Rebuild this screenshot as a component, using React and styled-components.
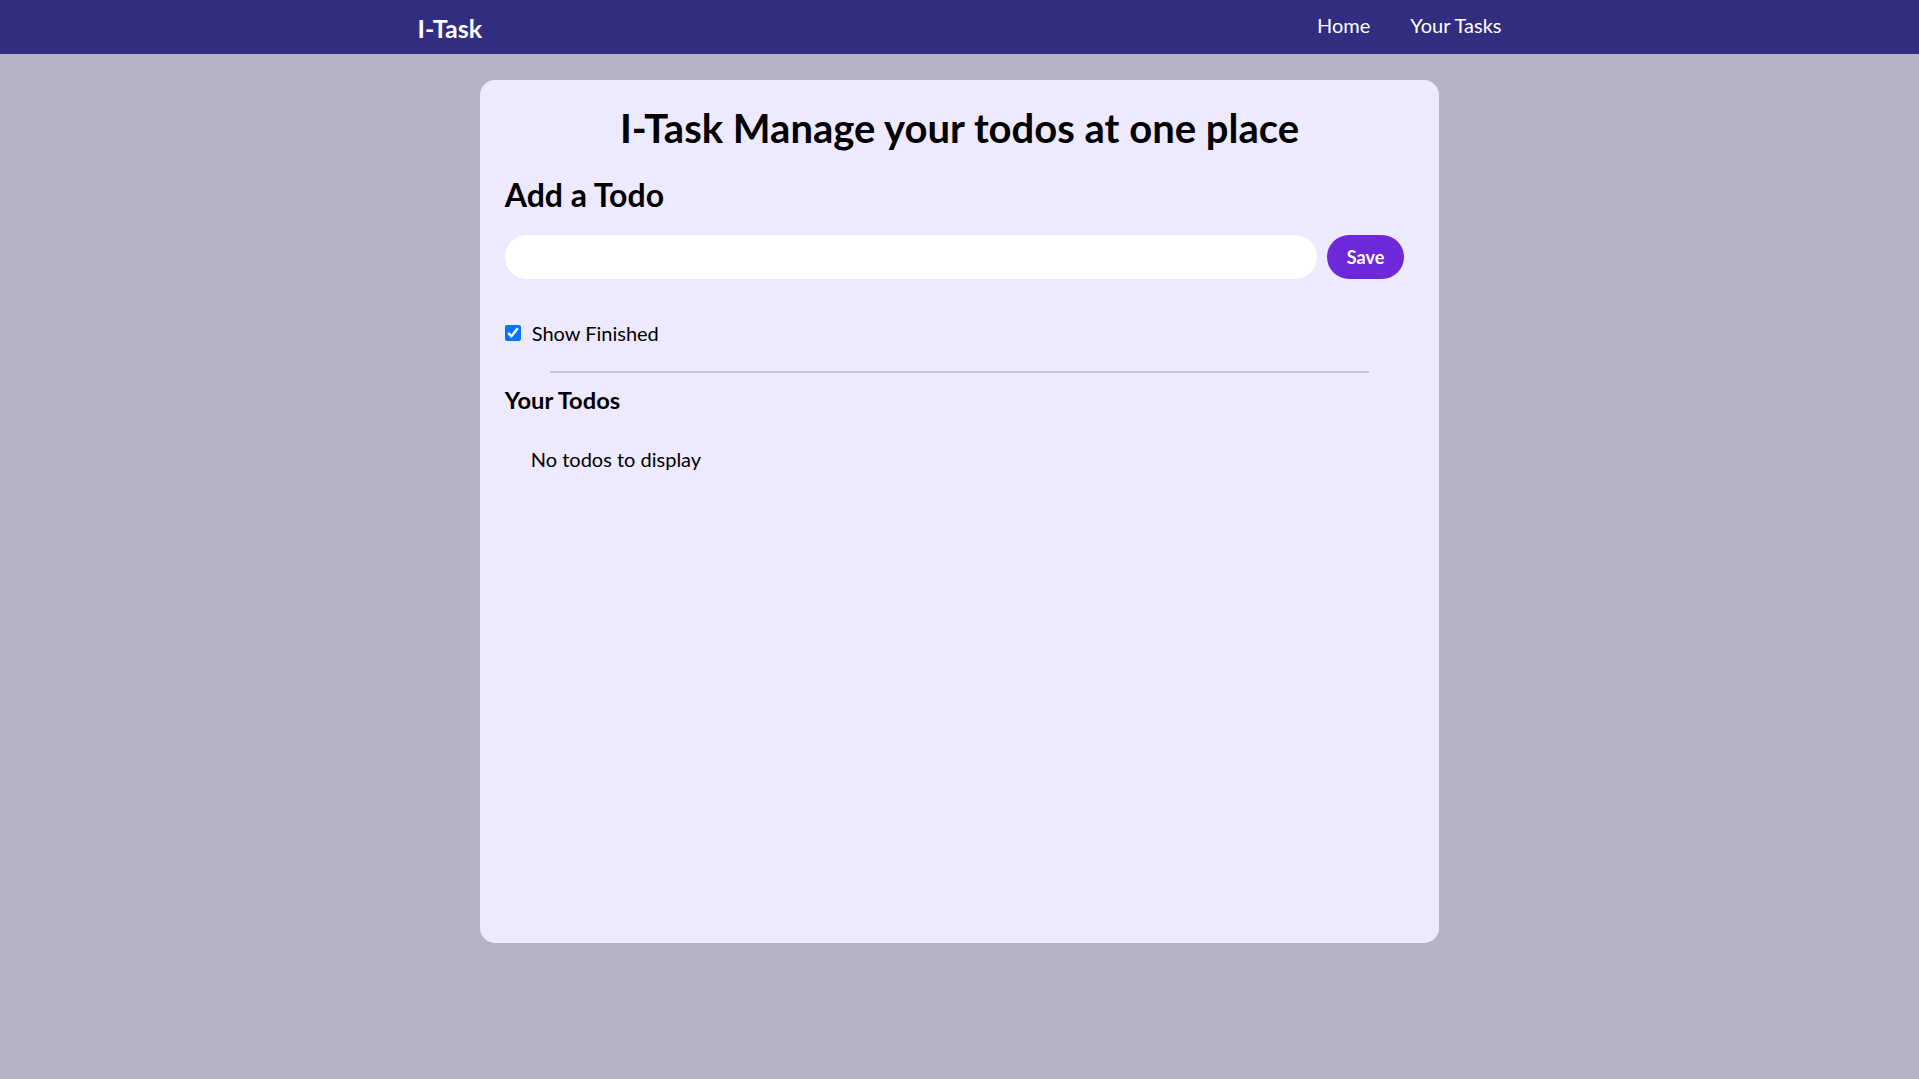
import React, { useState } from "react";
import styled, { createGlobalStyle } from "styled-components";

const GlobalStyle = createGlobalStyle`
  * {
    box-sizing: border-box;
  }
  body {
    margin: 0;
    background: #b4b3c3;
    font-family: "Lato", "Liberation Sans", sans-serif;
    color: #000;
  }
`;

const Nav = styled.nav`
  height: 54px;
  background: #312d80;
  color: #fff;
  display: flex;
  justify-content: space-around;
  align-items: center;
`;

const Logo = styled.span`
  font-size: 25px;
  font-weight: 700;
  margin-top: 2px;
`;

const NavList = styled.ul`
  display: flex;
  gap: 40px;
  list-style: none;
  margin: 0;
  padding: 0;
  font-size: 20px;
  margin-top: -4px;
`;

const NavItem = styled.li`
  cursor: pointer;
  &:hover {
    font-weight: 700;
  }
`;

const Card = styled.main`
  width: 50%;
  min-height: 80vh;
  margin: 26px auto;
  padding: 25px;
  background: #ede9fe;
  border-radius: 15px;
`;

const Title = styled.h1`
  margin: 1px 0 0;
  font-size: 40px;
  line-height: 45px;
  font-weight: 700;
  text-align: center;
`;

const SectionTitle = styled.h2`
  margin: 24px 0 0;
  font-size: 32px;
  line-height: 40px;
  font-weight: 700;
`;

const FormRow = styled.div`
  display: flex;
  margin-top: 20px;
`;

const TodoInput = styled.input`
  flex: 1;
  height: 44px;
  border: none;
  border-radius: 9999px;
  background: #fff;
  padding: 0 20px;
  font-size: 20px;
  font-family: inherit;
  outline: none;
`;

const SaveButton = styled.button`
  margin: 0 10px;
  height: 44px;
  padding: 0 20px;
  border: none;
  border-radius: 9999px;
  background: #6d28d9;
  color: #fff;
  font-family: inherit;
  font-size: 18px;
  font-weight: 700;
  cursor: pointer;
`;

const CheckRow = styled.label`
  display: flex;
  align-items: center;
  gap: 11px;
  margin-top: 36px;
  height: 35px;
  font-size: 20px;
  cursor: pointer;
`;

const Checkbox = styled.input`
  width: 16px;
  height: 16px;
  margin: 0;
  accent-color: #0075ff;
`;

const Divider = styled.div`
  width: 90%;
  margin: 21px auto 0;
  border-top: 2px solid #c6c4d3;
`;

const ListTitle = styled.h3`
  margin: 10px 0 0;
  font-size: 23.7px;
  line-height: 35px;
  font-weight: 700;
`;

const Empty = styled.div`
  margin: 26px 26px;
  font-size: 20px;
  line-height: 30px;
`;

export default function App() {
  const [todo, setTodo] = useState("");
  const [showFinished, setShowFinished] = useState(true);
  const todos = [];

  return (
    <>
      <GlobalStyle />
      <Nav>
        <Logo>I-Task</Logo>
        <NavList>
          <NavItem>Home</NavItem>
          <NavItem>Your Tasks</NavItem>
        </NavList>
      </Nav>
      <Card>
        <Title>I-Task Manage your todos at one place</Title>
        <SectionTitle>Add a Todo</SectionTitle>
        <FormRow>
          <TodoInput value={todo} onChange={e => setTodo(e.target.value)} />
          <SaveButton>Save</SaveButton>
        </FormRow>
        <CheckRow>
          <Checkbox
            type="checkbox"
            checked={showFinished}
            onChange={() => setShowFinished(!showFinished)}
          />
          Show Finished
        </CheckRow>
        <Divider />
        <ListTitle>Your Todos</ListTitle>
        {todos.length === 0 && <Empty>No todos to display</Empty>}
      </Card>
    </>
  );
}
